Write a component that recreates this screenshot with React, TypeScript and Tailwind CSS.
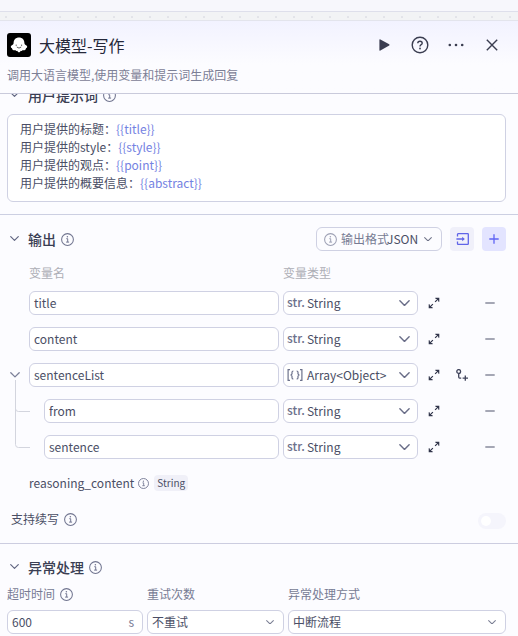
import React from 'react';

interface IconProps {
  className?: string;
}

const InfoIcon = ({ className = 'size-[13px] text-[#717590]' }: IconProps) => (
  <svg className={`shrink-0 ${className}`} viewBox="0 0 13 13" fill="none" stroke="currentColor">
    <circle cx="6.5" cy="6.5" r="5.9" strokeWidth="1.05" />
    <path d="M5.3 5.7H6.7V9M5.1 9.1H8.1" strokeWidth="1" />
    <circle cx="6.4" cy="3.8" r="0.75" fill="currentColor" stroke="none" />
  </svg>
);

const Chevron = ({ className = 'mx-[0.5px] w-[9px] text-[#606580]' }: IconProps) => (
  <svg className={`shrink-0 ${className}`} viewBox="0 0 10 6" fill="none" stroke="currentColor">
    <path d="M0.8 0.7L5 4.9L9.2 0.7" strokeWidth="1.3" strokeLinecap="round" strokeLinejoin="round" />
  </svg>
);

const ExpandIcon = () => (
  <svg className="h-3 w-3 shrink-0 text-[#31354b]" viewBox="0 0 12 12" fill="none" stroke="currentColor" strokeWidth="1.2">
    <path d="M10.2 1.8L7.1 4.9M1.8 10.2L4.9 7.1" />
    <path d="M7.3 0.7H11.3V4.7L10.1 4.4V3L9 1.9H7.6ZM4.7 11.3H0.7V7.3L1.9 7.6V9L3 10.1H4.4Z" fill="currentColor" stroke="none" />
  </svg>
);

const AddChildIcon = () => (
  <svg className="h-3 w-3 shrink-0 text-[#3f435b]" viewBox="0 0 12 12" fill="none" stroke="currentColor" strokeWidth="1.3">
    <circle cx="2.7" cy="2.5" r="1.9" />
    <path d="M2.7 4.4V8.1Q2.7 9.1 3.7 9.1H5.2M6.6 9.1H12M9.3 6.4V11.8" />
  </svg>
);

const LogoIcon = () => (
  <svg className="h-6 w-6 shrink-0" viewBox="0 0 24 24">
    <rect width="24" height="24" rx="3" fill="#000" />
    <path
      d="M12 4.6C8.8 4.6 6.7 6.8 6.6 10C6.5 11.4 5.7 12 4.6 12.5C3.4 13 3.6 15 5 15.2C5.2 17 6.8 17.6 8.2 17.1C8.9 18.3 9.9 18.2 10.4 17.8C11 19.8 13 19.8 13.6 17.8C14.1 18.2 15.1 18.3 15.8 17.1C17.2 17.6 18.8 17 19 15.2C20.4 15 20.6 13 19.4 12.5C18.3 12 17.5 11.4 17.4 10C17.3 6.8 15.2 4.6 12 4.6Z"
      fill="#fff"
    />
    <path d="M9.2 11.6V12.9M14.6 11.6V12.9M9.8 14Q12 16.2 14.2 14" fill="none" stroke="#333" strokeWidth="0.8" />
  </svg>
);

interface SectionTitleProps {
  title: string;
}

const SectionTitle = ({ title }: SectionTitleProps) => (
  <div className="flex items-center">
    <Chevron />
    <h3 className="ml-[9px] text-sm leading-5 font-medium text-[#3a3e53]">{title}</h3>
    <InfoIcon className="ml-[5px] size-[13px] text-[#717590]" />
  </div>
);

interface PromptLineProps {
  label: string;
  variable: string;
}

const PromptLine = ({ label, variable }: PromptLineProps) => (
  <p className="h-[18px] leading-[18px]">
    {label}
    <span className="text-[#7482e2]">{`{{${variable}}}`}</span>
  </p>
);

interface VariableRowProps {
  name: string;
  type?: string;
  nested?: boolean;
  hasChildren?: boolean;
}

const VariableRow = ({ name, type = 'String', nested, hasChildren }: VariableRowProps) => (
  <div className="flex h-6 items-center">
    <div className="relative w-[22px] shrink-0">
      {hasChildren && (
        <>
          <Chevron className="ml-[3px] w-[10px] text-[#7c8099]" />
          <svg className="absolute top-2 left-2 h-[70px] w-4" viewBox="0 0 16 70" fill="none" stroke="#d3d5de">
            <path d="M0.5 0V64.5Q0.5 67.5 3.5 67.5H15M0.5 28.5Q0.5 31.5 3.5 31.5H15" />
          </svg>
        </>
      )}
    </div>
    {nested && <div className="w-[15px] shrink-0" />}
    <div className="flex h-6 flex-1 items-center rounded-md border border-[#cfd1e3] bg-white px-1">{name}</div>
    <div className="ml-1 flex h-6 w-[135px] shrink-0 items-center rounded-md border border-[#cfd1e3] bg-white pr-[6px] pl-[3px]">
      <span className="w-5 shrink-0 text-[#6d728c]">
        {hasChildren ? (
          <svg className="h-3 w-4" viewBox="0 0 16 12" fill="none" stroke="currentColor" strokeWidth="1.2">
            <path d="M3 0.7H1.1V11.3H3M13 0.7H14.9V11.3H13M6.4 2Q5 2 5 3.3V4.8L4 6L5 7.2V8.7Q5 10 6.4 10M9.6 2Q11 2 11 3.3V4.8L12 6L11 7.2V8.7Q11 10 9.6 10" />
          </svg>
        ) : (
          <span className="relative -top-px font-medium">str.</span>
        )}
      </span>
      <span className="flex-1">{type}</span>
      <Chevron className="mr-px w-[11px] text-[#6a6e88]" />
    </div>
    <div className="flex w-[88px] shrink-0 items-center pl-[10px]">
      <ExpandIcon />
      <div className="ml-4 w-3">{hasChildren && <AddChildIcon />}</div>
      <svg className="ml-[17px] h-2 w-[10px]" viewBox="0 0 10 8">
        <path d="M0.3 4H9.7" stroke="#888b9c" strokeWidth="1.5" />
      </svg>
    </div>
  </div>
);

interface SelectFieldProps {
  value: string;
}

const SelectField = ({ value }: SelectFieldProps) => (
  <div className="flex h-6 items-center justify-between rounded-md border border-[#cfd1e3] bg-white pr-[9px] pl-1">
    {value}
    <Chevron className="w-2 text-[#7b7f94]" />
  </div>
);

const App = () => {
  return (
    <div
      className="h-[636px] w-[518px] overflow-hidden bg-[#fcfcff] text-xs text-[#4a4e65]"
      style={{ fontFamily: '"Noto Sans CJK SC", sans-serif' }}
    >
      <div className="h-3 border-b border-[#dedfeb] bg-[#f7f7fc]" />
      <div className="h-[9px] border-b border-[#e3e4ec] bg-[#f2f3f5]">
        <svg className="h-2 w-full">
          <defs>
            <pattern id="dots" width="18" height="8" patternUnits="userSpaceOnUse">
              <rect x="5" y="4" width="2" height="2" rx="0.5" fill="#e2e3e8" />
            </pattern>
          </defs>
          <rect width="100%" height="8" fill="url(#dots)" />
        </svg>
      </div>

      <header className="h-[73px] border-b border-[#c9cadb] bg-linear-to-b from-[#f2f2ff] to-[#fcfcff] to-60% px-[7px] pt-3">
        <div className="flex h-6 items-center">
          <LogoIcon />
          <h2 className="ml-2 flex-1 text-base text-[#25283a]">大模型-写作</h2>
          <div className="flex items-center pr-[13px] text-[#3a3d50]">
            <svg className="h-3 w-[11px]" viewBox="0 0 11 12" fill="currentColor">
              <path d="M0.4 1.1Q0.4 0 1.4 0.5L10.2 5.3Q11 6 10.2 6.6L1.4 11.4Q0.4 12 0.4 11Z" />
            </svg>
            <svg className="ml-[21px] size-[18px]" viewBox="0 0 18 18" fill="none" stroke="currentColor" strokeWidth="1.4">
              <circle cx="9" cy="9" r="7.8" />
              <path d="M6.8 7.3Q6.8 5.2 9 5.2T11.2 7.2Q11.2 8.3 9.9 8.9Q9 9.4 9 10.5" />
              <circle cx="9" cy="12.5" r="0.9" fill="currentColor" stroke="none" />
            </svg>
            <svg className="ml-[19px] h-3 w-4" viewBox="0 0 16 12" fill="currentColor">
              <circle cx="1.8" cy="6" r="1.3" />
              <circle cx="8" cy="6" r="1.3" />
              <circle cx="14.2" cy="6" r="1.3" />
            </svg>
            <svg className="ml-[22px] h-3 w-3" viewBox="0 0 12 12" fill="none" stroke="currentColor" strokeWidth="1.4">
              <path d="M0.8 0.8L11.2 11.2M11.2 0.8L0.8 11.2" />
            </svg>
          </div>
        </div>
        <p className="mt-[10px] text-[#7c8096]">调用大语言模型,使用变量和提示词生成回复</p>
      </header>

      <section className="h-[121px] overflow-hidden border-b border-[#cccfe2]">
        <div className="-mt-[9px] flex h-5 items-center pl-[9px]">
          <SectionTitle title="用户提示词" />
        </div>
        <div className="mt-[9px] mr-3 ml-[7px] h-[88px] rounded-md border border-[#cfd1e3] bg-white px-3 py-[5px]">
          <PromptLine label="用户提供的标题：" variable="title" />
          <PromptLine label="用户提供的style：" variable="style" />
          <PromptLine label="用户提供的观点：" variable="point" />
          <PromptLine label="用户提供的概要信息：" variable="abstract" />
        </div>
      </section>

      <section className="h-[329px] border-b border-[#cccde0] pt-3 pr-3 pl-[7px]">
        <div className="flex h-6 items-center pl-[2px]">
          <SectionTitle title="输出" />
          <div className="ml-auto flex h-6 w-[126px] items-center rounded-md border border-[#cfd1e3] pl-[7px]">
            <InfoIcon className="size-[13px] text-[#9da0b4]" />
            <span className="ml-1 w-[46px] whitespace-nowrap text-[#777b93]">输出格式</span>
            <span>JSON</span>
            <Chevron className="ml-[6px] w-2 text-[#707489]" />
          </div>
          <button className="ml-2 flex size-6 items-center justify-center rounded bg-[#f0f0fa]">
            <svg className="h-3 w-[13px] text-[#6064e8]" viewBox="0 0 13 12" fill="none" stroke="currentColor" strokeWidth="1.3">
              <path d="M1.5 3.5V1.3Q1.5 0.7 2.1 0.7H11.7Q12.3 0.7 12.3 1.3V10.7Q12.3 11.3 11.7 11.3H2.1Q1.5 11.3 1.5 10.7V8.5M0.4 6H7.5" />
              <path d="M6.2 3.8L8.8 6L6.2 8.2Z" fill="currentColor" stroke="none" />
            </svg>
          </button>
          <button className="ml-2 flex size-6 items-center justify-center rounded bg-[#e3e4ff]">
            <svg className="h-[10px] w-[10px]" viewBox="0 0 10 10" stroke="#6064f4" strokeWidth="1.3">
              <path d="M0.3 5H9.7M5 0.3V9.7" />
            </svg>
          </button>
        </div>
        <div className="mt-[13px] flex h-[18px] items-center pl-[22px] text-[#adaeb6]">
          <span className="w-[254px]">变量名</span>
          <span>变量类型</span>
        </div>
        <div className="mt-[9px] flex flex-col gap-3">
          <VariableRow name="title" />
          <VariableRow name="content" />
          <VariableRow name="sentenceList" type="Array<Object>" hasChildren />
          <VariableRow name="from" nested />
          <VariableRow name="sentence" nested />
        </div>
        <div className="mt-3 flex h-6 items-center pl-[22px]">
          <span>reasoning_content</span>
          <InfoIcon className="ml-1 size-[11px] text-[#717590]" />
          <span className="ml-[5px] flex h-4 items-center rounded bg-[#f0f0f8] px-[3px] text-[10px]">String</span>
        </div>
        <div className="mt-3 flex h-6 items-center pl-1">
          <span>支持续写</span>
          <InfoIcon className="ml-[5px] size-[13px] text-[#717590]" />
          <div className="mt-[3px] ml-auto flex h-4 w-7 items-center rounded-full bg-[#f5f5fc] pl-[3px]">
            <div className="size-[10px] rounded-full bg-white" />
          </div>
        </div>
      </section>

      <section className="pt-[11px] pr-3 pl-[7px]">
        <div className="flex h-6 items-center pl-[2px]">
          <SectionTitle title="异常处理" />
        </div>
        <div className="mt-[6px] grid grid-cols-[136px_137px_218px] gap-x-1 gap-y-[7px]">
          <div className="flex h-[18px] items-center text-[#777b94]">
            超时时间
            <InfoIcon className="ml-[5px] size-[13px] text-[#717590]" />
          </div>
          <div className="flex h-[18px] items-center text-[#777b94]">重试次数</div>
          <div className="flex h-[18px] items-center text-[#777b94]">异常处理方式</div>
          <div className="flex h-6 items-center justify-between rounded-md border border-[#cfd1e3] bg-white pr-2 pl-1">
            600
            <span className="text-[#777b94]">s</span>
          </div>
          <SelectField value="不重试" />
          <SelectField value="中断流程" />
        </div>
      </section>
    </div>
  );
};

export default App;
